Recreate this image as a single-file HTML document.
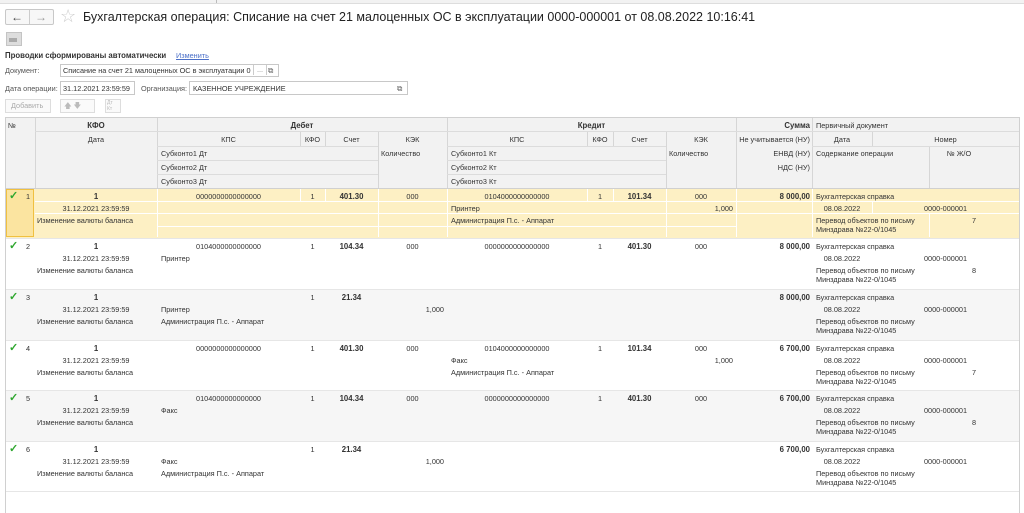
<!DOCTYPE html>
<html><head><meta charset="utf-8">
<style>
body{margin:0;width:1024px;height:513px;overflow:hidden;background:#fff;font-family:"Liberation Sans",Arial,sans-serif;position:relative;color:#333}
.a{position:absolute;white-space:nowrap;font-size:7.3px;line-height:10px}
.b{font-weight:bold;font-size:7.8px}
.r{text-align:right}.c{text-align:center}
.box{position:absolute;border:1px solid #c8c8c8;background:#fff;box-sizing:border-box}
.hl{position:absolute;background:#e4e4e4;height:1px}
.vl{position:absolute;background:#e0e0e0;width:1px}
</style></head><body>
<div style="position:absolute;left:0;top:0;width:1024px;height:3px;border-bottom:1px solid #ddd;background:#f2f2f2"></div>
<div style="position:absolute;left:216px;top:0;width:1px;height:3px;background:#bbb"></div>
<div class="box" style="left:5px;top:9px;width:49px;height:16px;border-radius:2px;background:#f7f7f7"></div>
<div style="position:absolute;left:29px;top:10px;width:1px;height:14px;background:#ccc"></div>
<div class="a" style="left:11px;top:10px;font-size:12px;line-height:14px;color:#444">&#8592;</div>
<div class="a" style="left:35px;top:10px;font-size:12px;line-height:14px;color:#999">&#8594;</div>
<div class="a" style="left:60px;top:6px;font-size:18px;line-height:20px;color:#ccc">&#9734;</div>
<div class="a" style="left:83px;top:9px;font-size:12.5px;line-height:16px;color:#222">Бухгалтерская операция: Списание на счет 21 малоценных ОС в эксплуатации 0000-000001 от 08.08.2022 10:16:41</div>
<div style="position:absolute;left:6px;top:32px;width:14px;height:12px;background:#ddd;border:1px solid #c4c4c4"></div>
<div style="position:absolute;left:9px;top:38px;width:8px;height:4px;background:#aaa"></div>
<div class="a b" style="left:5px;top:51px">Проводки сформированы автоматически</div>
<div class="a" style="left:176px;top:51px;color:#4a6fc8;text-decoration:underline">Изменить</div>
<div class="a" style="left:5px;top:66px;color:#555">Документ:</div>
<div class="box" style="left:60px;top:64px;width:219px;height:13px"></div>
<div class="a" style="left:63px;top:66px">Списание на счет 21 малоценных ОС в эксплуатации 0</div>
<div class="a" style="left:253px;top:65px;color:#888;border-left:1px solid #ccc;border-right:1px solid #ccc;width:12px;text-align:center">...</div>
<div class="a" style="left:268px;top:66px;color:#666">&#10697;</div>
<div class="a" style="left:5px;top:84px;color:#555">Дата операции:</div>
<div class="box" style="left:60px;top:81px;width:75px;height:14px"></div>
<div class="a" style="left:63px;top:84px">31.12.2021 23:59:59</div>
<div class="a" style="left:141px;top:84px;color:#555">Организация:</div>
<div class="box" style="left:189px;top:81px;width:219px;height:14px"></div>
<div class="a" style="left:193px;top:84px">КАЗЕННОЕ УЧРЕЖДЕНИЕ</div>
<div class="a" style="left:397px;top:84px;color:#666">&#10697;</div>
<div class="box" style="left:5px;top:99px;width:46px;height:14px;background:#fafafa;border-color:#ddd"></div>
<div class="a" style="left:11px;top:101px;color:#aaa">Добавить</div>
<div class="box" style="left:60px;top:99px;width:35px;height:14px;background:#fafafa;border-color:#ddd"></div>
<div class="a" style="left:64px;top:101px;color:#bbb">&#129093; &#129095;</div>
<div class="box" style="left:105px;top:99px;width:16px;height:14px;background:#fafafa;border-color:#ddd"></div>
<div class="a" style="left:107px;top:100px;color:#bbb;font-size:5px;line-height:6px">Дт<br>Кт</div>

<div id="t" style="position:absolute;left:5px;top:117px;width:1015px;height:396px;border:1px solid #d0d0d0;border-bottom:none;box-sizing:border-box"></div>
<div style="position:absolute;left:6px;top:118px;width:1013px;height:70px;background:#f2f2f2"></div>
<div id="g"></div>
<script>
var g=document.getElementById('g'),h='';
function T(x,y,s,cl,w){h+='<div class="a '+(cl||'')+'" style="left:'+x+'px;top:'+y+'px;'+(w?'width:'+w+'px;':'')+'">'+s+'</div>';}
function H(x,y,w,c){h+='<div class="hl" style="left:'+x+'px;top:'+y+'px;width:'+w+'px;'+(c?'background:'+c:'')+'"></div>';}
function V(x,y,hh,c){h+='<div class="vl" style="left:'+x+'px;top:'+y+'px;height:'+hh+'px;'+(c?'background:'+c:'')+'"></div>';}
[35,157,447,736,812].forEach(function(x){V(x,118,70,'#d6d6d6')});
[300,325,378,587,613,666,872].forEach(function(x){V(x,131,15,'#d6d6d6')});
[378,666,929].forEach(function(x){V(x,146,42,'#d6d6d6')});
H(35,131,984,'#dcdcdc');H(157,146,221,'#dcdcdc');H(447,146,219,'#dcdcdc');H(157,160,221,'#dcdcdc');H(447,160,219,'#dcdcdc');H(157,174,221,'#dcdcdc');H(447,174,219,'#dcdcdc');H(812,146,207,'#dcdcdc');
H(6,188,1013,'#d0d0d0');
T(8,121,'№');T(35,121,'КФО','b c',122);T(157,121,'Дебет','b c',290);T(447,121,'Кредит','b c',289);T(740,121,'Сумма','b r',70);T(816,121,'Первичный документ');
T(35,135,'Дата','c',122);T(157,135,'КПС','c',143);T(300,135,'КФО','c',25);T(325,135,'Счет','c',53);T(378,135,'КЭК','c',69);
T(447,135,'КПС','c',140);T(587,135,'КФО','c',26);T(613,135,'Счет','c',53);T(666,135,'КЭК','c',70);T(736,135,'Не учитывается (НУ)','r',74);T(812,135,'Дата','c',60);T(872,135,'Номер','c',147);
T(161,149,'Субконто1 Дт');T(161,163,'Субконто2 Дт');T(161,177,'Субконто3 Дт');T(381,149,'Количество');
T(451,149,'Субконто1 Кт');T(451,163,'Субконто2 Кт');T(451,177,'Субконто3 Кт');T(669,149,'Количество');
T(736,149,'ЕНВД (НУ)','r',74);T(736,163,'НДС (НУ)','r',74);T(816,149,'Содержание операции');T(929,149,'№ Ж/О','c',60);
var Z='0000000000000000',O='0104000000000000',A='Администрация П.с. - Аппарат';
var R=[
[Z,'401.30','000','','',O,'101.34','000','Принтер',A,'8 000,00','7'],
[O,'104.34','000','Принтер','',Z,'401.30','000','','','8 000,00','8'],
['','21.34','','Принтер',A,'','','','','','8 000,00',''],
[Z,'401.30','000','','',O,'101.34','000','Факс',A,'6 700,00','7'],
[O,'104.34','000','Факс','',Z,'401.30','000','','','6 700,00','8'],
['','21.34','','Факс',A,'','','','','','6 700,00','']];
var tops=[188,238,289,340,390,441];
R.forEach(function(d,i){var y=tops[i],hh=(i<5?tops[i+1]:491)-y;
 var bg=i==0?'#fdf0c4':(i%2==0?'#f6f6f6':'#fff');
 h+='<div style="position:absolute;left:6px;top:'+(y+1)+'px;width:1013px;height:'+(hh-1)+'px;background:'+bg+'"></div>';
 if(i==0){h+='<div style="position:absolute;left:6px;top:189px;width:28px;height:48px;border:1px solid #f0c040;box-sizing:border-box;background:#fbe4a0"></div>';
  [157,300,325,378,447,587,613,666,736,812].forEach(function(x){V(x,189,12,'#fff')});
  [157,378,447,666,736,812,872].forEach(function(x){V(x,201,12,'#fff')});
  [157,378,447,666,736,812,929].forEach(function(x){V(x,213,24,'#fff')});
  H(35,201,984,'#fff');H(35,213,984,'#fff');H(157,226,580,'#fff');}
 H(6,y+hh,1013,'#e6e6e6');
 var a=y+4,b=y+16,c=y+28;
 h+='<div class="a" style="left:9px;top:'+(a-1)+'px;color:#2ea62e;font-size:11px;line-height:11px;font-weight:bold">&#10003;</div>';
 T(26,a,String(i+1));
 T(35,a,'1','b c',122);T(35,b,'31.12.2021 23:59:59','c',122);T(37,c,'Изменение валюты баланса');
 T(157,a,d[0],'c',143);T(300,a,'1','c',25);T(325,a,d[1],'b c',53);T(378,a,d[2],'c',69);
 T(161,b,d[3]);T(161,c,d[4]);if(i%3==2)T(378,b,'1,000','r',66);
 if(d[5]){T(447,a,d[5],'c',140);T(587,a,'1','c',26);T(613,a,d[6],'b c',53);T(666,a,d[7],'c',70);}
 T(451,b,d[8]);T(451,c,d[9]);if(i%3==0)T(666,b,'1,000','r',67);
 T(736,a,d[10],'b r',74);T(816,a,'Бухгалтерская справка');T(812,b,'08.08.2022','c',60);T(872,b,'0000-000001','c',147);
 T(816,c,'Перевод объектов по письму');T(816,c+9,'Минздрава №22-0/1045');T(929,c,d[11],'c',90);
});
g.innerHTML=h;
</script>
</body></html>
